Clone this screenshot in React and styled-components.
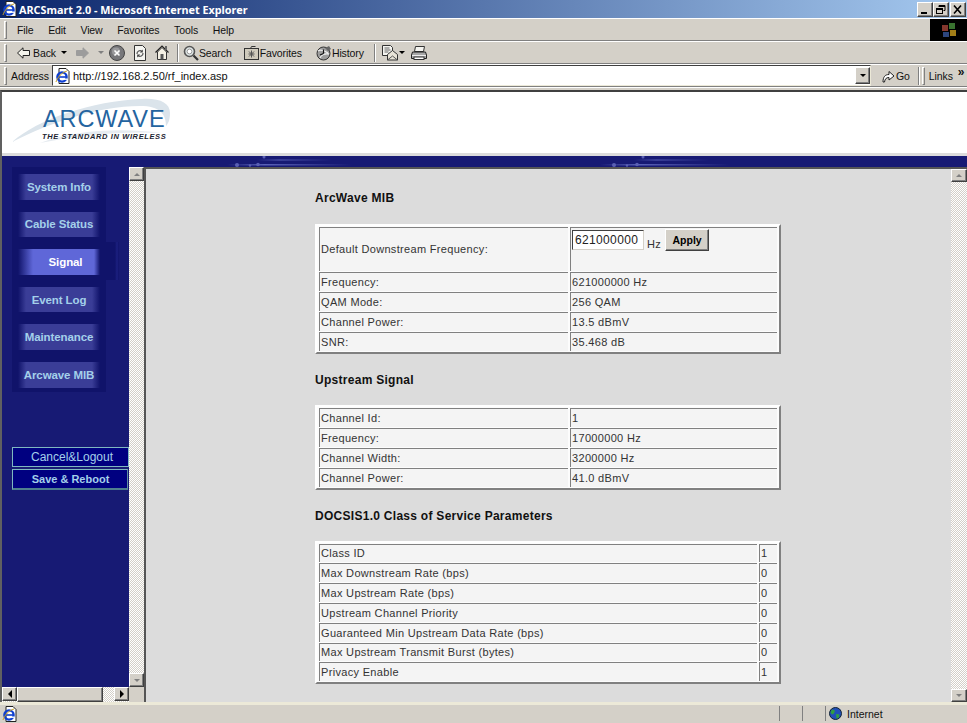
import React from "react";
import styled, { createGlobalStyle, css } from "styled-components";

const GlobalStyle = createGlobalStyle`
  html, body {
    margin: 0;
    padding: 0;
    background: #d4d0c8;
  }
  * {
    box-sizing: border-box;
  }
`;

const raised = css`
  background: #d4d0c8;
  border: 1px solid;
  border-color: #fff #404040 #404040 #fff;
  box-shadow: inset -1px -1px 0 #808080;
`;

const hatch = css`
  background-color: #fff;
  background-image: repeating-conic-gradient(#d4d0c8 0 25%, #fff 0 50%);
  background-size: 2px 2px;
`;

const Window = styled.div`
  width: 967px;
  height: 723px;
  display: flex;
  flex-direction: column;
  overflow: hidden;
  font-family: "Liberation Sans", Arial, sans-serif;
`;

const TitleBar = styled.div`
  height: 18px;
  flex: none;
  display: flex;
  align-items: center;
  padding: 0 1px 0 2px;
  background: linear-gradient(90deg, #0a246a 0%, #a6caf0 100%);
`;

const TitleText = styled.div`
  flex: 1;
  margin-left: 1px;
  color: #fff;
  font-size: 10.8px;
  font-weight: 700;
  font-family: "Noto Sans", sans-serif;
`;

const WinButton = styled.div`
  ${raised}
  width: 16px;
  height: 15px;
  margin-left: ${(p) => p.$gap || 0}px;
  display: flex;
  align-items: center;
  justify-content: center;
`;

const BarRow = styled.div`
  height: 23px;
  flex: none;
  display: flex;
  align-items: center;
  background: #d4d0c8;
  border-top: 1px solid #fff;
  border-bottom: 1px solid #808080;
  font-size: 10.5px;
  letter-spacing: -0.1px;
  color: #111;
  position: relative;
`;

const Grip = styled.div`
  width: 3px;
  height: 18px;
  flex: none;
  margin-left: ${(p) => p.$left ?? 4}px;
  border: 1px solid;
  border-color: #fff #808080 #808080 #fff;
`;

const MenuList = styled.div`
  display: flex;
  gap: 14.6px;
  margin-left: 10px;
  flex: 1;
`;

const FlagBox = styled.div`
  width: 37px;
  height: 22px;
  background: #000;
  display: flex;
  align-items: center;
  justify-content: center;
  align-self: stretch;
`;

const ToolItem = styled.div`
  display: flex;
  align-items: center;
  gap: ${(p) => p.$gap ?? 2}px;
  margin-left: ${(p) => p.$left || 0}px;
  flex: none;
  width: ${(p) => (p.$w ? `${p.$w}px` : "auto")};
`;

const Chevrons = styled.strong`
  margin: -7px 0 0 5px;
  font-size: 12px;
`;

const Divider = styled.div`
  width: 2px;
  height: 18px;
  flex: none;
  margin-left: ${(p) => p.$left || 0}px;
  border-left: 1px solid #808080;
  border-right: 1px solid #fff;
`;

const AddressField = styled.div`
  width: 819px;
  height: 21px;
  display: flex;
  align-items: center;
  background: #fff;
  border: 1px solid;
  border-color: #404040 #ece9d8 #ece9d8 #404040;
  padding-left: 2px;
  gap: 2px;
  letter-spacing: 0;
`;

const UrlText = styled.div`
  flex: 1;
  font-size: 11px;
`;

const DropButton = styled.div`
  ${raised}
  width: 15px;
  height: 17px;
  display: flex;
  align-items: center;
  justify-content: center;
`;

const BarGap = styled.div`
  height: 3px;
  flex: none;
  background: #d4d0c8;
  border-top: 1px solid #fff;
`;

const Page = styled.div`
  height: 612px;
  flex: none;
  display: flex;
  flex-direction: column;
  border-top: 2px solid #404040;
  border-left: 2px solid #606060;
  background: #fff;
`;

const Header = styled.div`
  height: 61px;
  flex: none;
  background: #fff;
`;

const Logo = styled.div`
  position: relative;
  width: 170px;
  height: 61px;
  margin-left: 10px;
`;

const Swoosh = styled.svg`
  position: absolute;
  left: 0;
  top: 5px;
`;

const LogoName = styled.div`
  position: absolute;
  left: 31px;
  top: 13px;
  color: #24649f;
  font-size: 23.5px;
  line-height: 28px;
  letter-spacing: 0.9px;
  white-space: nowrap;
`;

const LogoTag = styled.div`
  position: absolute;
  left: 30px;
  top: 40px;
  color: #1c2430;
  font-size: 7.5px;
  line-height: 9px;
  font-weight: 700;
  font-style: italic;
  letter-spacing: 0.62px;
  white-space: nowrap;
`;

const Strip = styled.div`
  height: 3px;
  flex: none;
  background: #dcdcdc;
`;

const Band = styled.svg`
  display: block;
  flex: none;
  background: #171a74;
`;

const Frames = styled.div`
  height: 535px;
  flex: none;
  display: flex;
`;

const LeftFrame = styled.div`
  width: 142px;
  flex: none;
  display: grid;
  grid-template-columns: 127px 15px;
  grid-template-rows: 520px 15px;
  background: #171a74;
`;

const NavArea = styled.div`
  background: #171a74;
  padding-left: 10px;
  display: flex;
  flex-direction: column;
  align-items: flex-start;
`;

const NavPanel = styled.div`
  position: relative;
  width: 94px;
  height: 225px;
  background: #10136a;
  padding: 7px 0 0 6px;
  display: flex;
  flex-direction: column;
  gap: 12px;
`;

const NavItem = styled.div`
  width: 82px;
  height: 25.6px;
  flex: none;
  display: flex;
  align-items: center;
  justify-content: center;
  font-size: 11.5px;
  font-weight: 700;
  letter-spacing: -0.1px;
  padding-left: ${(p) => (p.$active ? 13 : 0)}px;
  color: ${(p) => (p.$active ? "#fff" : "#a4d0ea")};
  background: linear-gradient(
    90deg,
    transparent 0,
    ${(p) => (p.$active ? "#5f67d8" : "#3a3d97")} ${(p) => (p.$active ? 15 : 8)}px,
    ${(p) => (p.$active ? "#5f67d8" : "#3a3d97")} calc(100% - ${(p) => (p.$active ? 6 : 8)}px),
    transparent 100%
  );
`;

const ActiveTab = styled.div`
  position: absolute;
  left: 94px;
  top: 75px;
  width: 13px;
  height: 38px;
  background: linear-gradient(90deg, #10136a 0, #10136a 9px, #1c2080 11px, #10136a 13px);
`;

const ActionButton = styled.div`
  width: ${(p) => (p.$bold ? 116 : 117)}px;
  height: ${(p) => (p.$bold ? 21 : 20)}px;
  margin-top: ${(p) => p.$top || 0}px;
  display: flex;
  align-items: center;
  justify-content: center;
  background: #000080;
  color: #a4d0ea;
  font-size: ${(p) => (p.$bold ? 11 : 12)}px;
  font-weight: ${(p) => (p.$bold ? 700 : 400)};
  padding-left: ${(p) => (p.$bold ? 1 : 3)}px;
  border: 1px solid #7fb8c0;
  border-right-color: ${(p) => (p.$bold ? "#5f8f9f" : "#7fb8c0")};
  border-bottom-color: ${(p) => (p.$bold ? "#4f7f8f" : "#7fb8c0")};
  border-bottom-width: ${(p) => (p.$bold ? 2 : 1)}px;
`;

const VScroll = styled.div`
  ${hatch}
  display: flex;
  flex-direction: column;
  justify-content: space-between;
  align-items: flex-start;
`;

const ScrollBtn = styled.div`
  ${raised}
  width: ${(p) => p.$w || 15}px;
  height: ${(p) => p.$h || 14}px;
  flex: none;
  display: flex;
  align-items: center;
  justify-content: center;
`;

const HScroll = styled.div`
  ${hatch}
  display: flex;
  align-items: stretch;
  justify-content: space-between;
`;

const HThumb = styled.div`
  ${raised}
  width: 86px;
`;

const HGroup = styled.div`
  display: flex;
`;

const Corner = styled.div`
  background: #d4d0c8;
`;

const RightFrame = styled.div`
  flex: 1;
  display: flex;
  background: #dcdcdc;
  border-top: 2px solid #555;
  border-left: 2px solid #555;
  min-width: 0;
`;

const Content = styled.div`
  flex: 1;
  padding: 21px 0 0 169px;
`;

const Heading = styled.h3`
  margin: ${(p) => p.$top ?? 18}px 0 ${(p) => p.$bottom ?? 17}px;
  height: 16px;
  font-size: 12px;
  line-height: 16px;
  font-weight: 700;
  letter-spacing: 0.28px;
  color: #111;
  white-space: nowrap;
`;

const DataTable = styled.table`
  width: 466px;
  border-collapse: separate;
  border-spacing: 2px 1px;
  table-layout: fixed;
  background: #fcfcfc;
  border: 2px solid;
  border-color: #fff #808080 #808080 #fff;
`;

const Cell = styled.td`
  height: ${(p) => p.$h || 19}px;
  padding: 0 0 1px 1px;
  background: #f4f4f4;
  border-top: 1px solid #808080;
  border-left: 1px solid #808080;
  font-size: 11px;
  line-height: 14px;
  color: #333;
  letter-spacing: 0.32px;
  white-space: nowrap;
  overflow: hidden;
  vertical-align: middle;
`;

const FormCell = styled(Cell)`
  vertical-align: top;
  padding-top: 2px;
`;

const FormRow = styled.div`
  display: flex;
  align-items: flex-start;
`;

const NumberInput = styled.div`
  width: 72px;
  height: 20px;
  background: #fff;
  border: 1px solid;
  border-color: #404040 #d4d0c8 #d4d0c8 #404040;
  padding: 2px 0 0 2px;
  font-size: 12px;
  letter-spacing: 0.35px;
  line-height: 14px;
  color: #222;
`;

const Unit = styled.span`
  margin: 7px 4px 0 3px;
`;

const ApplyButton = styled.div`
  ${raised}
  width: 44px;
  height: 22px;
  margin-top: -1px;
  display: flex;
  align-items: center;
  justify-content: center;
  font-size: 10.5px;
  font-weight: 700;
  letter-spacing: 0;
  color: #000;
`;

const StatusBar = styled.div`
  height: 20px;
  flex: none;
  display: flex;
  align-items: center;
  background: #d4d0c8;
  border-top: 3px solid #ece9d8;
  font-size: 10.5px;
  color: #111;
`;

const StatusPane = styled.div`
  height: 15px;
  flex: ${(p) => (p.$grow ? 1 : "none")};
  width: ${(p) => p.$w || 0}px;
  display: flex;
  align-items: center;
  gap: 5px;
  padding-left: ${(p) => p.$pad || 0}px;
  border-left: ${(p) => (p.$grow ? "none" : "1px solid #808080")};
`;

const Triangle = ({ dir = "down", color = "#000", size = 3 }) => {
  const points = {
    down: `0,0 ${size * 2},0 ${size},${size}`,
    up: `0,${size} ${size * 2},${size} ${size},0`,
    left: `${size},0 ${size},${size * 2} 0,${size}`,
    right: `0,0 0,${size * 2} ${size},${size}`,
  };
  const flat = dir === "down" || dir === "up";
  return (
    <svg width={flat ? size * 2 : size} height={flat ? size : size * 2}>
      <polygon points={points[dir]} fill={color} />
    </svg>
  );
};

const IeIcon = () => (
  <svg width="16" height="16" viewBox="0 0 16 16">
    <path d="M4 0.5h7l3 3v12h-10z" fill="#fff" stroke="#222" />
    <circle cx="7" cy="9" r="4.6" fill="none" stroke="#1040d0" strokeWidth="2.4" />
    <path d="M3 9h8" stroke="#1040d0" strokeWidth="1.6" />
    <path d="M7.5 11.2h5" stroke="#fff" strokeWidth="1.4" />
    <path d="M1 14c1-4 6-10 11-11" fill="none" stroke="#c9a020" strokeWidth="1" />
  </svg>
);

const MinimizeIcon = () => (
  <svg width="10" height="9">
    <rect x="1" y="7" width="6" height="2" fill="#000" />
  </svg>
);

const RestoreIcon = () => (
  <svg width="10" height="9" fill="none" stroke="#000">
    <path d="M3 2V0.5h6v5H7.5" />
    <path d="M3 1.5h6" />
    <rect x="0.5" y="3.5" width="6" height="5" />
    <path d="M1 4.5h5" />
  </svg>
);

const CloseIcon = () => (
  <svg width="10" height="9" stroke="#000" strokeWidth="1.6">
    <path d="M1 0.5l7 8M8 0.5l-7 8" />
  </svg>
);

const FlagIcon = () => (
  <svg width="16" height="16" viewBox="0 0 16 16" opacity="0.75">
    <rect x="1" y="3" width="6" height="6" fill="#b04a3c" />
    <rect x="8" y="1" width="6" height="6" fill="#4d9a40" />
    <rect x="2" y="10" width="6" height="5" fill="#3c5ea8" />
    <rect x="9" y="8" width="6" height="6" fill="#d8a820" />
  </svg>
);

const ArrowIcon = ({ dir, color, stroke }) => (
  <svg width="13" height="12" viewBox="0 0 13 12">
    <path
      d={dir === "left" ? "M0.5 6L6 0.8V3.5H12.5V8.5H6V11.2z" : "M12.5 6L7 0.8V3.5H0.5V8.5H7V11.2z"}
      fill={color}
      stroke={stroke}
    />
  </svg>
);

const StopIcon = () => (
  <svg width="16" height="16" viewBox="0 0 16 16">
    <circle cx="8" cy="8" r="7.5" fill="#77777a" stroke="#444" />
    <circle cx="7" cy="6.5" r="4" fill="#9a9a9c" />
    <path d="M5.5 5.5l5 5M10.5 5.5l-5 5" stroke="#fff" strokeWidth="1.6" />
  </svg>
);

const RefreshIcon = () => (
  <svg width="14" height="16" viewBox="0 0 14 16">
    <path d="M1.5 0.5h8l3 3v12h-11z" fill="#f4f4f0" stroke="#333" />
    <path d="M4 9a3 3 0 0 1 5-2.5M10 8a3 3 0 0 1-5 2.5" fill="none" stroke="#555" strokeWidth="1.2" />
    <path d="M9.8 4.5v3h-3zM4.2 12.5v-3h3z" fill="#444" />
  </svg>
);

const HomeIcon = () => (
  <svg width="14" height="15" viewBox="0 0 14 15">
    <path d="M0.5 7.5L7 1l6.5 6.5" fill="none" stroke="#222" strokeWidth="1.2" />
    <path d="M2.5 7L7 2.5 11.5 7v7.5h-9z" fill="#f4f0e4" stroke="#333" />
    <rect x="5.5" y="9" width="3" height="5.5" fill="#555" />
    <rect x="10" y="1" width="2" height="4" fill="#666" />
  </svg>
);

const SearchIcon = () => (
  <svg width="16" height="16" viewBox="0 0 16 16">
    <circle cx="6.5" cy="6.5" r="5" fill="#dfe6e6" stroke="#555" strokeWidth="1.6" />
    <circle cx="6.5" cy="6.5" r="2.4" fill="#fff" stroke="#999" />
    <path d="M10.5 10.5l4.5 4.5" stroke="#333" strokeWidth="2.2" />
  </svg>
);

const FavoritesIcon = () => (
  <svg width="15" height="14" viewBox="0 0 15 14">
    <rect x="0.5" y="2.5" width="14" height="11" fill="#cfcabc" stroke="#333" />
    <path d="M0.5 2.5h6l1-2h4" fill="none" stroke="#333" />
    <path d="M7.5 4.5v7M4.5 8h6M5 5.5l5 5M10 5.5l-5 5" stroke="#555" />
  </svg>
);

const HistoryIcon = () => (
  <svg width="16" height="16" viewBox="0 0 16 16">
    <circle cx="7.5" cy="8.5" r="6.5" fill="#9c9c9c" stroke="#333" />
    <path d="M2 6c3-2 7 0 10 2M4 13c1-3 5-5 9-4" fill="none" stroke="#eee" strokeWidth="1.3" />
    <path d="M7.5 8.5V4.5M7.5 8.5L4 10" stroke="#111" strokeWidth="1.2" />
    <path d="M9 3l4-2 2 3-3 2z" fill="#666" />
  </svg>
);

const MailIcon = () => (
  <svg width="16" height="16" viewBox="0 0 16 16">
    <path d="M0.5 0.5h8l2 2v8h-10z" fill="#f4f4f0" stroke="#333" />
    <path d="M2.5 3h5M2.5 5h6M2.5 7h4" stroke="#666" />
    <path d="M5.5 9.5l5-4 5 4v5.5h-10z" fill="#e8e4d8" stroke="#333" />
    <path d="M5.5 15l5-4 5 4" fill="none" stroke="#555" />
  </svg>
);

const PrintIcon = () => (
  <svg width="16" height="14" viewBox="0 0 16 14">
    <path d="M4.5 0.5h9l-1 5h-9z" fill="#f4f4f0" stroke="#333" />
    <path d="M1.5 6h13l1 3v3.5h-15v-3.5z" fill="#a8a8a8" stroke="#222" />
    <path d="M1 9.5h14" stroke="#eee" />
    <rect x="3" y="11" width="10" height="2.5" fill="#fff" stroke="#333" />
  </svg>
);

const GoIcon = () => (
  <svg width="13" height="15" viewBox="0 0 13 15">
    <path d="M1 14C1 9 3 6.5 7 6.5V3.5l5 4.5-5 4V9.5C4 9.5 3 11 2.5 14z" fill="#fff" stroke="#222" />
  </svg>
);

const GlobeIcon = () => (
  <svg width="13" height="13" viewBox="0 0 13 13">
    <circle cx="6.5" cy="6.5" r="6" fill="#2050b8" stroke="#123" />
    <path d="M3 2.5l3 1-1 3-2 1-1.5-2zM7 7l3.5 0.5-1 3.5-2 0.5z" fill="#30a040" />
  </svg>
);

const navItems = ["System Info", "Cable Status", "Signal", "Event Log", "Maintenance", "Arcwave MIB"];

const downstreamRows = [
  ["Frequency:", "621000000 Hz"],
  ["QAM Mode:", "256 QAM"],
  ["Channel Power:", "13.5 dBmV"],
  ["SNR:", "35.468 dB"],
];

const upstreamRows = [
  ["Channel Id:", "1"],
  ["Frequency:", "17000000 Hz"],
  ["Channel Width:", "3200000 Hz"],
  ["Channel Power:", "41.0 dBmV"],
];

const serviceRows = [
  ["Class ID", "1", 18],
  ["Max Downstream Rate (bps)", "0"],
  ["Max Upstream Rate (bps)", "0"],
  ["Upstream Channel Priority", "0"],
  ["Guaranteed Min Upstream Data Rate (bps)", "0"],
  ["Max Upstream Transmit Burst (bytes)", "0", 18],
  ["Privacy Enable", "1"],
];

const Rows = ({ rows }) =>
  rows.map(([label, value, height]) => (
    <tr key={label}>
      <Cell $h={height}>{label}</Cell>
      <Cell $h={height}>{value}</Cell>
    </tr>
  ));

const Columns = ({ first, second }) => (
  <colgroup>
    <col style={{ width: first }} />
    <col style={{ width: second }} />
  </colgroup>
);

export default function App() {
  return (
    <Window>
      <GlobalStyle />
      <TitleBar>
        <IeIcon />
        <TitleText>ARCSmart 2.0 - Microsoft Internet Explorer</TitleText>
        <WinButton><MinimizeIcon /></WinButton>
        <WinButton><RestoreIcon /></WinButton>
        <WinButton $gap={1}><CloseIcon /></WinButton>
      </TitleBar>

      <BarRow>
        <Grip />
        <MenuList>
          <span>File</span>
          <span>Edit</span>
          <span>View</span>
          <span>Favorites</span>
          <span>Tools</span>
          <span>Help</span>
        </MenuList>
        <FlagBox><FlagIcon /></FlagBox>
      </BarRow>

      <BarRow>
        <Grip />
        <ToolItem $left={10} $gap={3}>
          <ArrowIcon dir="left" color="#f4f4ec" stroke="#222" />
          <span>Back</span>
        </ToolItem>
        <ToolItem $left={5}><Triangle /></ToolItem>
        <ToolItem $left={9}><ArrowIcon dir="right" color="#9c9c9c" stroke="#9c9c9c" /></ToolItem>
        <ToolItem $left={9}><Triangle color="#808080" /></ToolItem>
        <ToolItem $left={5}><StopIcon /></ToolItem>
        <ToolItem $left={8}><RefreshIcon /></ToolItem>
        <ToolItem $left={8}><HomeIcon /></ToolItem>
        <Divider $left={8} />
        <ToolItem $left={4} $gap={0}>
          <SearchIcon />
          <span>Search</span>
        </ToolItem>
        <ToolItem $left={12} $gap={1}>
          <FavoritesIcon />
          <span>Favorites</span>
        </ToolItem>
        <ToolItem $left={14} $gap={0}>
          <HistoryIcon />
          <span>History</span>
        </ToolItem>
        <Divider $left={10} />
        <ToolItem $left={6} $gap={1}>
          <MailIcon />
          <Triangle />
        </ToolItem>
        <ToolItem $left={6}><PrintIcon /></ToolItem>
      </BarRow>

      <BarRow>
        <Grip />
        <ToolItem $left={4} $w={41}>Address</ToolItem>
        <AddressField>
          <IeIcon />
          <UrlText>http://192.168.2.50/rf_index.asp</UrlText>
          <DropButton><Triangle /></DropButton>
        </AddressField>
        <ToolItem $left={11} $gap={1}>
          <GoIcon />
          <span>Go</span>
        </ToolItem>
        <Divider $left={8} />
        <Grip $left={2} />
        <ToolItem $left={4}>Links</ToolItem>
        <Chevrons>»</Chevrons>
      </BarRow>
      <BarGap />

      <Page>
        <Header>
          <Logo>
            <Swoosh width="170" height="52" viewBox="0 0 170 52">
              <path
                d="M0 45C26 22 80 4 130 2c18-1 28 4 28 14 0 7-2 11-4 13 0-12-6-20-26-20C85 9 38 26 0 45z"
                fill="#dbe4eb"
              />
              <path d="M28 46C60 34 105 30 150 36c-40-2-82 2-122 10z" fill="#e6ebf0" />
            </Swoosh>
            <LogoName>ARCWAVE</LogoName>
            <LogoTag>THE STANDARD IN WIRELESS</LogoTag>
          </Logo>
        </Header>
        <Strip />
        <Band width="965" height="11" viewBox="0 0 965 11">
          <defs>
            <linearGradient id="glow">
              <stop offset="0" stopColor="#5a62b8" stopOpacity="0" />
              <stop offset="0.3" stopColor="#5a62b8" />
              <stop offset="1" stopColor="#5a62b8" stopOpacity="0" />
            </linearGradient>
          </defs>
          <g fill="url(#glow)">
            <rect x="225" y="8" width="125" height="1.5" />
            <rect x="255" y="3.5" width="75" height="1" />
            <rect x="598" y="8" width="130" height="1.5" />
            <rect x="632" y="3.5" width="75" height="1" />
          </g>
          <g fill="#5a60b4">
            <circle cx="235" cy="9" r="2" />
            <circle cx="248" cy="9.5" r="1.2" />
            <circle cx="256" cy="8.5" r="1.8" />
            <circle cx="262" cy="1" r="1.5" />
            <circle cx="612" cy="9" r="2" />
            <circle cx="625" cy="9.5" r="1.2" />
            <circle cx="635" cy="8.5" r="1.8" />
            <circle cx="641" cy="1" r="1.5" />
          </g>
        </Band>

        <Frames>
          <LeftFrame>
            <NavArea>
              <NavPanel>
                {navItems.map((name) => (
                  <NavItem key={name} $active={name === "Signal"}>{name}</NavItem>
                ))}
                <ActiveTab />
              </NavPanel>
              <ActionButton $top={55}>Cancel&amp;Logout</ActionButton>
              <ActionButton $top={2} $bold>Save &amp; Reboot</ActionButton>
            </NavArea>
            <VScroll>
              <ScrollBtn><Triangle dir="up" color="#808080" /></ScrollBtn>
              <ScrollBtn><Triangle color="#808080" /></ScrollBtn>
            </VScroll>
            <HScroll>
              <HGroup>
                <ScrollBtn><Triangle dir="left" size={4} /></ScrollBtn>
                <HThumb />
              </HGroup>
              <ScrollBtn><Triangle dir="right" size={4} /></ScrollBtn>
            </HScroll>
            <Corner />
          </LeftFrame>

          <RightFrame>
            <Content>
              <Heading $top={0} $bottom={18}>ArcWave MIB</Heading>
              <DataTable>
                <Columns first={249} second={207} />
                <tbody>
                  <tr>
                    <Cell $h={44}>Default Downstream Frequency:</Cell>
                    <FormCell $h={44}>
                      <FormRow>
                        <NumberInput>621000000</NumberInput>
                        <Unit>Hz</Unit>
                        <ApplyButton>Apply</ApplyButton>
                      </FormRow>
                    </FormCell>
                  </tr>
                  <Rows rows={downstreamRows} />
                </tbody>
              </DataTable>

              <Heading>Upstream Signal</Heading>
              <DataTable>
                <Columns first={249} second={207} />
                <tbody>
                  <Rows rows={upstreamRows} />
                </tbody>
              </DataTable>

              <Heading>DOCSIS1.0 Class of Service Parameters</Heading>
              <DataTable>
                <Columns first={438} second={18} />
                <tbody>
                  <Rows rows={serviceRows} />
                </tbody>
              </DataTable>
            </Content>
            <VScroll>
              <ScrollBtn $w={16} $h={13}><Triangle dir="up" color="#808080" /></ScrollBtn>
              <ScrollBtn $w={16} $h={13}><Triangle color="#808080" /></ScrollBtn>
            </VScroll>
          </RightFrame>
        </Frames>
      </Page>

      <StatusBar>
        <StatusPane $grow $pad={2}><IeIcon /></StatusPane>
        <StatusPane $w={23} />
        <StatusPane $w={23} />
        <StatusPane $w={142} $pad={3}>
          <GlobeIcon />
          <span>Internet</span>
        </StatusPane>
      </StatusBar>
    </Window>
  );
}
